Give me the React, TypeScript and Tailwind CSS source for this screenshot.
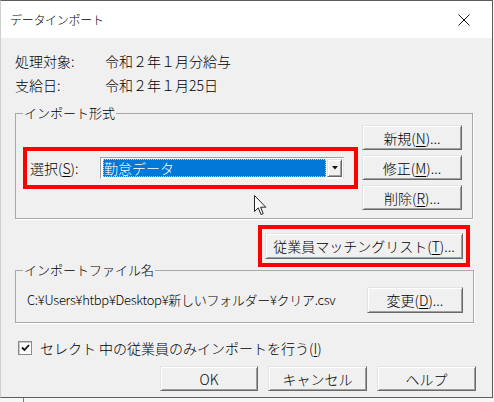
import React from "react";

// classic raised 3D push button
const btn =
  "flex items-center justify-center bg-[#f0f0f0] border border-t-[#e3e3e3] border-l-[#e3e3e3] border-b-[#696969] border-r-[#696969] shadow-[inset_1px_1px_0_#ffffff,inset_-1px_-1px_0_#a0a0a0] text-[14px] leading-none";

const Btn = ({ w, h, children }: { w: string; h: string; children: React.ReactNode }) => (
  <div className={`${btn} ${w} ${h}`}>{children}</div>
);

const Key = ({ k }: { k: string }) => <span className="underline underline-offset-2">{k}</span>;

export default function App() {
  return (
    <div className="relative w-[494px] h-[402px] bg-[#f6f6f6] flex flex-col font-['Noto_Sans_CJK_JP','Noto_Sans',sans-serif] font-light text-black overflow-hidden">
      {/* dialog window */}
      <div className="w-[493px] h-[398px] flex flex-col border border-[#5c5c5c] border-l-[#cfcfcf]">
        {/* title bar */}
        <div className="h-[37px] shrink-0 bg-white flex items-center justify-between pl-[9px] pr-[22px]">
          <span className="text-[12px] tracking-[-0.3px]">データインポート</span>
          <svg width="12" height="12" viewBox="0 0 12 12">
            <path d="M0.5 0.5 L11.5 11.5 M11.5 0.5 L0.5 11.5" stroke="#111" strokeWidth="1" />
          </svg>
        </div>

        {/* body */}
        <div className="flex-1 bg-[#f0f0f0] flex flex-col pt-[11px] text-[14px]">
          <div className="flex pl-[14px] leading-[24px]">
            <span className="w-[90px]">処理対象:</span>
            <span>令和２年１月分給与</span>
          </div>
          <div className="flex pl-[14px] leading-[24px]">
            <span className="w-[90px]">支給日:</span>
            <span>令和２年１月25日</span>
          </div>

          {/* import type group */}
          <fieldset className="mt-[7px] ml-[14px] w-[458px] border border-[#a8a8a8] shadow-[1px_1px_0_#ffffff]">
            <legend className="ml-[7px] px-[1px] text-[13px] leading-[18px]">インポート形式</legend>
            <div className="flex items-start pl-[7px] pr-[10px] pt-[3px] pb-[8px] gap-[4px]">
              <div className="mt-[22px] w-[335px] h-[42px] border-4 border-[#ff0000] flex items-center pl-[3px]">
                <span className="w-[70px]">
                  選択(<Key k="S" />):
                </span>
                {/* combo box */}
                <div className="w-[244px] h-[22px] flex bg-white border border-t-[#a0a0a0] border-l-[#a0a0a0] border-b-white border-r-[#e3e3e3] p-[1px] pl-[2px]">
                  <div className="flex-1 h-full bg-[#0078d7] border border-dotted border-[#d8d890] flex items-center text-white leading-none">
                    勤怠データ
                  </div>
                  <div className={`${btn} w-[15px] h-full ml-[1px]`}>
                    <svg width="6" height="4" viewBox="0 0 6 4">
                      <path d="M0 0 H6 L3 3.5 Z" fill="#111" />
                    </svg>
                  </div>
                </div>
              </div>
              <div className="flex flex-col gap-[5px]">
                <Btn w="w-[100px]" h="h-[25px]">
                  新規(<Key k="N" />)...
                </Btn>
                <Btn w="w-[100px]" h="h-[25px]">
                  修正(<Key k="M" />)...
                </Btn>
                <Btn w="w-[100px]" h="h-[25px]">
                  削除(<Key k="R" />)...
                </Btn>
              </div>
            </div>
          </fieldset>

          {/* matching list button */}
          <div className="mt-[6px] ml-[257px] w-[212px] h-[42px] border-4 border-[#ff0000] flex items-center justify-center">
            <Btn w="w-[198px]" h="h-[26px]">
              従業員マッチングリスト(<Key k="T" />)...
            </Btn>
          </div>

          {/* import file group */}
          <fieldset className="-mt-[6px] ml-[14px] w-[459px] border border-[#a8a8a8] shadow-[1px_1px_0_#ffffff]">
            <legend className="ml-[7px] px-[1px] text-[13px] leading-[18px]">インポートファイル名</legend>
            <div className="flex items-center justify-between pl-[11px] pr-[10px] pt-[8px] pb-[9px]">
              <span className="text-[13px] tracking-[-0.3px]">C:¥Users¥htbp¥Desktop¥新しいフォルダー¥クリア.csv</span>
              <Btn w="w-[96px]" h="h-[26px]">
                変更(<Key k="D" />)...
              </Btn>
            </div>
          </fieldset>

          {/* selection-only checkbox */}
          <div className="mt-[15px] ml-[17px] h-[20px] flex items-center gap-[8px]">
            <div className="w-[14px] h-[14px] bg-white border border-[#8a8a8a] shadow-[inset_1px_1px_0_#c8c8c8] flex items-center justify-center">
              <svg width="9" height="8" viewBox="0 0 9 8">
                <path d="M1 3.5 L3.5 6 L8 1" stroke="#111" strokeWidth="1.8" fill="none" />
              </svg>
            </div>
            <span>
              セレクト 中の従業員のみインポートを行う(<Key k="I" />)
            </span>
          </div>

          {/* dialog buttons */}
          <div className="mt-[8px] ml-[159px] flex gap-[10px]">
            <Btn w="w-[98px]" h="h-[25px]">OK</Btn>
            <Btn w="w-[99px]" h="h-[25px]">キャンセル</Btn>
            <Btn w="w-[99px]" h="h-[25px]">ヘルプ</Btn>
          </div>
        </div>
      </div>
      <div className="flex-1 flex">
        <div className="ml-[23px] w-px bg-[#7a7a7a]" />
      </div>

      {/* mouse pointer */}
      <svg className="absolute left-[254px] top-[195px]" width="13" height="21" viewBox="0 0 13 21">
        <path d="M0.5 0.5 V16.5 L4.3 12.8 L7 19.5 L9.2 18.6 L6.6 12.2 H11.8 Z" fill="#fff" stroke="#222" strokeWidth="1" strokeLinejoin="round" />
      </svg>
    </div>
  );
}
